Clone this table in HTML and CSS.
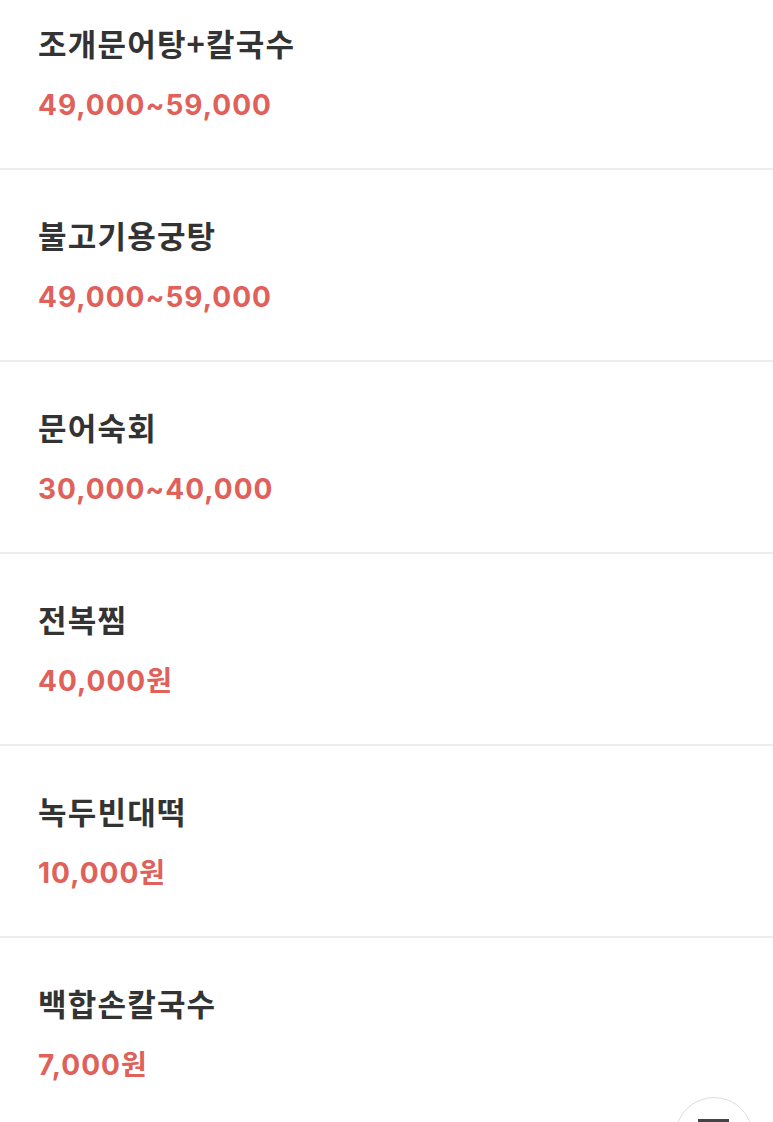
FILE: index.html
```html
<!DOCTYPE html>
<html lang="ko">
<head>
<meta charset="utf-8">
<link rel="stylesheet" href="styles.css">
</head>
<body>
<ul class="menu-list">
  <li class="menu-item"><span class="menu-name">조개문어탕+칼국수</span><span class="menu-price">49,000~59,000</span></li>
  <li class="menu-item"><span class="menu-name">불고기용궁탕</span><span class="menu-price">49,000~59,000</span></li>
  <li class="menu-item"><span class="menu-name">문어숙회</span><span class="menu-price">30,000~40,000</span></li>
  <li class="menu-item"><span class="menu-name">전복찜</span><span class="menu-price">40,000원</span></li>
  <li class="menu-item"><span class="menu-name">녹두빈대떡</span><span class="menu-price">10,000원</span></li>
  <li class="menu-item"><span class="menu-name">백합손칼국수</span><span class="menu-price">7,000원</span></li>
</ul>
<button class="fab" aria-label="menu"><span class="fab-bar"></span></button>
</body>
</html>
```
FILE: styles.css
```css
html, body {
  margin: 0;
  padding: 0;
  background: #fff;
  overflow: hidden;
}
body {
  font-family: "Noto Sans CJK KR", "Noto Sans", sans-serif;
  width: 773px;
  height: 1122px;
  position: relative;
}
.menu-list {
  list-style: none;
  margin: -22px 0 0 0;
  padding: 0;
}
.menu-item {
  height: 190px;
  box-sizing: content-box;
  border-bottom: 2px solid #eeeeee;
  padding: 0 38px;
  display: flex;
  flex-direction: column;
  justify-content: center;
  gap: 25px;
}
.menu-name {
  font-size: 31px;
  line-height: 38px;
  font-weight: 600;
  color: #333333;
  letter-spacing: 1.2px;
}
.menu-price {
  font-family: "Inter", "Noto Sans CJK KR", sans-serif;
  font-size: 28px;
  line-height: 36px;
  font-weight: 700;
  color: #e0605a;
  letter-spacing: 1px;
}
.fab {
  position: absolute;
  left: 675px;
  top: 1097px;
  width: 78px;
  height: 78px;
  border-radius: 50%;
  border: 1.5px solid #dddddd;
  background: #fff;
  padding: 0;
}
.fab-bar {
  position: absolute;
  left: 22px;
  top: 21px;
  width: 31px;
  height: 3px;
  background: #444;
}
```
